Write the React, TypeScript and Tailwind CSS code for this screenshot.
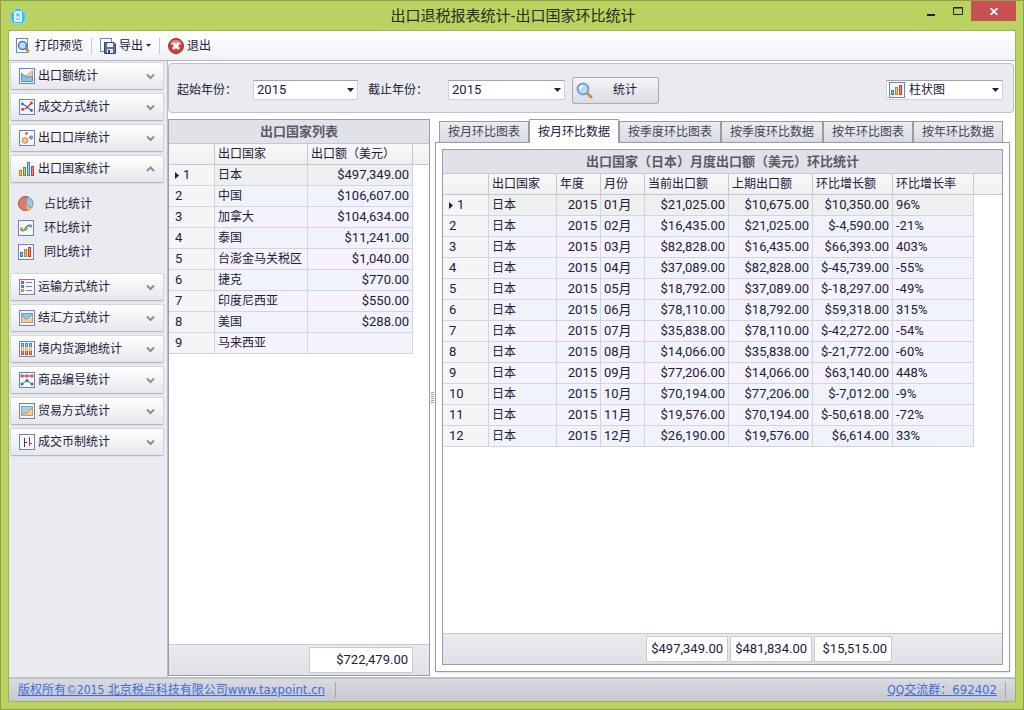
import React from 'react';

// Toolbar and sidebar glyphs, all drawn on a 16x16 grid
const Frame: React.FC<{ children?: React.ReactNode }> = ({ children }) => (
    <svg width="16" height="16" viewBox="0 0 16 16" className="shrink-0" aria-hidden="true">
        <rect x="0.5" y="0.5" width="15" height="15" fill="#f4f7fd" stroke="#6c84bd" />
        {children}
    </svg>
);

const BarsIcon = () => (
    <Frame>
        <rect x="2.5" y="8.5" width="2" height="4" fill="#8ec5ee" stroke="#2f7fbf" />
        <rect x="6.5" y="5.5" width="2" height="7" fill="#f6c27a" stroke="#c77e2c" />
        <rect x="10.5" y="3.5" width="2" height="9" fill="#f08a70" stroke="#c9402c" />
    </Frame>
);

const AreaIcon = () => (
    <Frame>
        <path d="M4 8.5 L8 7.5 L13.5 2.5 V13 H3Z" fill="#f6d09a" stroke="#d99a58" />
        <path d="M2.5 5.5 L8 9.5 L13.5 8 V13.5 H2.5Z" fill="#8cc3e8" stroke="#4c8fc2" />
    </Frame>
);

const CrossIcon = () => (
    <Frame>
        <path d="M3.5 5 L7 7 L9 9 L12.5 11.5" stroke="#3a6fc0" strokeWidth="1.3" fill="none" />
        <path d="M3.5 10.5 L7 9.5 L12.5 4" stroke="#cc3d38" strokeWidth="1.3" fill="none" />
        <circle cx="3.5" cy="5" r="1.4" fill="#3a6fc0" />
        <circle cx="12.5" cy="11.5" r="1.4" fill="#3a6fc0" />
        <circle cx="3.5" cy="10.5" r="1.4" fill="#cc3d38" />
        <circle cx="12.5" cy="4" r="1.4" fill="#cc3d38" />
    </Frame>
);

const BubbleIcon = () => (
    <Frame>
        <circle cx="6" cy="10.5" r="2.8" fill="#f5c98d" stroke="#c98338" />
        <circle cx="12" cy="7.5" r="1.5" fill="#8fb8e6" stroke="#3d70b5" />
        <circle cx="7.5" cy="3.5" r="1" fill="#ee8a80" stroke="#c43b33" />
    </Frame>
);

const ColorBarsIcon = () => (
    <svg width="16" height="16" viewBox="0 0 16 16" className="shrink-0" aria-hidden="true">
        <rect x="0.5" y="9.5" width="2" height="5" fill="#f8cf8a" stroke="#c97a22" />
        <rect x="4.5" y="6.5" width="2" height="8" fill="#b4d67a" stroke="#5d9133" />
        <rect x="8.5" y="1.5" width="2" height="13" fill="#9ccaf0" stroke="#3e84c2" />
        <rect x="12.5" y="5.5" width="2" height="9" fill="#f08a78" stroke="#c4402e" />
    </svg>
);

const ListIcon = () => (
    <Frame>
        <rect x="2" y="2" width="3" height="3" fill="#d9503f" />
        <rect x="2" y="6" width="3" height="3" fill="#3a86cc" />
        <rect x="2" y="10" width="3" height="3" fill="#e58a2c" />
        <path d="M7 3.5H13 M7 7.5H13 M7 11.5H13" stroke="#6f87ba" />
    </Frame>
);

const EnvelopeIcon = () => (
    <Frame>
        <rect x="2.5" y="3.5" width="11" height="9" fill="#f5cd94" stroke="#d09450" />
        <path d="M2.5 3.5 V5 L7 9.5 L13.5 4 V3.5Z" fill="#8fc7ec" stroke="#5b9fcc" />
    </Frame>
);

const TubesIcon = () => (
    <Frame>
        {[2, 6, 10].map(x => (
            <g key={x}>
                <rect x={x} y="2" width="3" height="4" fill="#3f8ed2" />
                <rect x={x} y="6" width="3" height="4" fill="#f2b66a" />
                <rect x={x} y="10" width="3" height="4" fill="#d2452f" />
                <rect x={x + 1} y="3" width="1" height="10" fill="#fff" fillOpacity="0.45" />
            </g>
        ))}
    </Frame>
);

const LinesIcon = () => (
    <Frame>
        <path d="M3 4H13" stroke="#cc3d38" />
        <path d="M3 12 L8 8.5 L13 12" stroke="#2f6fc0" fill="none" />
        {[3, 8, 13].map(x => (
            <circle key={x} cx={x} cy="4" r="1.2" fill="#f6b5ae" stroke="#cc3d38" />
        ))}
        <circle cx="3" cy="12" r="1.5" fill="#2f6fc0" />
        <circle cx="8" cy="8.5" r="1.5" fill="#2f6fc0" />
        <circle cx="13" cy="12" r="1.5" fill="#2f6fc0" />
    </Frame>
);

const SlopeIcon = () => (
    <Frame>
        <rect x="2.5" y="3.5" width="11" height="9" fill="#9dd0ee" stroke="#7ba9c4" />
        <path d="M2.5 12.5 V10 L5 11 L8 10 L10 7 L13.5 5 V12.5Z" fill="#f5cd94" stroke="#d09450" />
    </Frame>
);

const TicksIcon = () => (
    <Frame>
        <path d="M5.5 4V13 M5.5 8.5H8" stroke="#3a3f55" fill="none" />
        <path d="M10.5 3V12 M10.5 9.5H13" stroke="#c9302c" fill="none" />
    </Frame>
);

const PieIcon = () => (
    <svg width="16" height="16" viewBox="0 0 16 16" className="shrink-0" aria-hidden="true">
        <circle cx="7.5" cy="7.5" r="7" fill="#e0796c" stroke="#b9473f" />
        <path d="M8 8 L10 1 A7 7 0 0 1 13.5 12Z" fill="#9ccbea" stroke="#6f9fc4" />
        <path d="M8 8 L13 12.5 A7 7 0 0 1 9 14.5Z" fill="#f4c48c" stroke="#d09450" />
    </svg>
);

const WaveIcon = () => (
    <Frame>
        <path d="M3 10.5 H6 C8 10.5 8 5.5 10 5.5 H13" stroke="#5b8a3c" strokeWidth="1.5" fill="none" />
        <circle cx="3.5" cy="9" r="1.2" fill="#e8c08a" stroke="#b7792e" />
        <circle cx="8" cy="8.5" r="1.3" fill="#c6dfae" stroke="#5b8a3c" />
        <circle cx="12.5" cy="6" r="1.2" fill="#a9cbee" stroke="#4a84c4" />
    </Frame>
);

const PreviewIcon = () => (
    <svg width="16" height="16" viewBox="0 0 16 16" className="shrink-0" aria-hidden="true">
        <rect x="0.5" y="0.5" width="11" height="14" fill="#fff" stroke="#7389b8" />
        <path d="M9.5 10.5 L13 14" stroke="#c9853d" strokeWidth="2.5" />
        <circle cx="6.5" cy="7.5" r="4" fill="#b9dcf5" stroke="#4d79b3" strokeWidth="1.5" />
    </svg>
);

const ExportIcon = () => (
    <svg width="16" height="16" viewBox="0 0 16 16" className="shrink-0" aria-hidden="true">
        <rect x="0.5" y="0.5" width="11" height="13" fill="#f7f9fd" stroke="#7389b8" />
        <path d="M4.5 4.5H14 L15.5 6V15.5H4.5Z" fill="#5f7193" stroke="#34476b" />
        <rect x="7" y="5" width="6" height="4" fill="#e9eef7" />
        <rect x="7" y="11" width="6" height="4" fill="#dfe6f2" />
        <rect x="8" y="12" width="2" height="3" fill="#34476b" />
    </svg>
);

const ExitIcon = () => (
    <svg width="16" height="16" viewBox="0 0 16 16" className="shrink-0" aria-hidden="true">
        <circle cx="8" cy="8" r="7.5" fill="#cf4037" stroke="#9d2e2a" />
        <path d="M2 6 A6.5 6.5 0 0 1 14 6 Q8 9 2 6Z" fill="#e2847b" />
        <path d="M5 5 L11 11 M11 5 L5 11" stroke="#fff" strokeWidth="2.8" />
    </svg>
);

const SearchIcon = () => (
    <svg width="17" height="17" viewBox="0 0 17 17" className="shrink-0" aria-hidden="true">
        <path d="M11 11 L15 15" stroke="#d58a3c" strokeWidth="3" strokeLinecap="round" />
        <circle cx="7" cy="7" r="5.5" fill="#b5dbf6" stroke="#7f9ccc" strokeWidth="2" />
        <path d="M4 7 A3 3 0 0 1 7 4" stroke="#fff" strokeWidth="1.5" fill="none" />
    </svg>
);

const AppIcon = () => (
    <svg width="16" height="16" viewBox="0 0 16 16" className="shrink-0" aria-hidden="true">
        <path d="M4 3 Q5 0 8 0 Q11 0 12 3 Q16 4 15.5 9 Q15 15.5 11 15.5 H5 Q1 15.5 0.5 9 Q0 4 4 3Z" fill="#3fbdf0" stroke="#7fe0f8" />
        <rect x="4.5" y="3.5" width="7" height="10" rx="1" fill="#d8f4fc" stroke="#fff" />
        <path d="M6 5.5L10 8.5M10 5.5L6 8.5M6 11H10" stroke="#4ab7df" fill="none" />
    </svg>
);

const Chevron: React.FC<{ up?: boolean }> = ({ up }) => (
    <svg width="9" height="7" viewBox="0 0 9 7" className="mr-2 ml-auto shrink-0" aria-hidden="true">
        <path d={up ? 'M1 5 L4.5 1.5 L8 5' : 'M1 1.5 L4.5 5 L8 1.5'} fill="none" stroke="#8b8c99" strokeWidth="2" />
    </svg>
);

const Caret = ({ className = 'w-[7px]' }: { className?: string }) => (
    <svg viewBox="0 0 7 4" className={`shrink-0 ${className}`} aria-hidden="true">
        <path d="M0 0H7L3.5 4Z" fill="#20203a" />
    </svg>
);

const topGroups = [
    { label: '出口额统计', icon: <AreaIcon /> },
    { label: '成交方式统计', icon: <CrossIcon /> },
    { label: '出口口岸统计', icon: <BubbleIcon /> },
    { label: '出口国家统计', icon: <ColorBarsIcon />, open: true },
];

const subItems = [
    { label: '占比统计', icon: <PieIcon /> },
    { label: '环比统计', icon: <WaveIcon /> },
    { label: '同比统计', icon: <BarsIcon /> },
];

const bottomGroups = [
    { label: '运输方式统计', icon: <ListIcon /> },
    { label: '结汇方式统计', icon: <EnvelopeIcon /> },
    { label: '境内货源地统计', icon: <TubesIcon /> },
    { label: '商品编号统计', icon: <LinesIcon /> },
    { label: '贸易方式统计', icon: <SlopeIcon /> },
    { label: '成交币制统计', icon: <TicksIcon /> },
];

const countries = [
    ['日本', '$497,349.00'],
    ['中国', '$106,607.00'],
    ['加拿大', '$104,634.00'],
    ['泰国', '$11,241.00'],
    ['台澎金马关税区', '$1,040.00'],
    ['捷克', '$770.00'],
    ['印度尼西亚', '$550.00'],
    ['美国', '$288.00'],
    ['马来西亚', ''],
];

const months = [
    ['01月', '$21,025.00', '$10,675.00', '$10,350.00', '96%'],
    ['02月', '$16,435.00', '$21,025.00', '$-4,590.00', '-21%'],
    ['03月', '$82,828.00', '$16,435.00', '$66,393.00', '403%'],
    ['04月', '$37,089.00', '$82,828.00', '$-45,739.00', '-55%'],
    ['05月', '$18,792.00', '$37,089.00', '$-18,297.00', '-49%'],
    ['06月', '$78,110.00', '$18,792.00', '$59,318.00', '315%'],
    ['07月', '$35,838.00', '$78,110.00', '$-42,272.00', '-54%'],
    ['08月', '$14,066.00', '$35,838.00', '$-21,772.00', '-60%'],
    ['09月', '$77,206.00', '$14,066.00', '$63,140.00', '448%'],
    ['10月', '$70,194.00', '$77,206.00', '$-7,012.00', '-9%'],
    ['11月', '$19,576.00', '$70,194.00', '$-50,618.00', '-72%'],
    ['12月', '$26,190.00', '$19,576.00', '$6,614.00', '33%'],
];

const tabs = ['按月环比图表', '按月环比数据', '按季度环比图表', '按季度环比数据', '按年环比图表', '按年环比数据'];

const rowColor = (i: number) => (i === 0 ? 'bg-[#eeefef]' : i % 2 ? 'bg-[#f0f4fa]' : 'bg-[#f7f3fc]');

const cell = 'h-[21px] border-r border-b border-[#d3d4dc] px-[3px] whitespace-nowrap';
const headCell = 'h-[21px] border-r border-b border-[#c6c7d0] px-[3px] text-left font-normal whitespace-nowrap';
const numeric = "font-[Roboto,'Noto_Sans_CJK_SC',sans-serif] text-[13px]";

const SideGroup: React.FC<{ label: string; icon: React.ReactNode; open?: boolean }> = ({ label, icon, open }) => (
    <button
        aria-expanded={!!open}
        className="flex h-7 w-full items-center gap-[3px] rounded-xs border border-[#d5d6dc] border-b-[#b5b6c0] bg-linear-to-b from-white to-[#e6e7eb] pl-2 shadow-xs"
    >
        {icon}
        <span>{label}</span>
        <Chevron up={open} />
    </button>
);

const RowHead: React.FC<{ index: number }> = ({ index }) => (
    <td className={`${cell} ${numeric} bg-[#f4f5f7]`}>
        <span className="flex items-center gap-1 pl-[3px]">
            {index === 0 && (
                <svg width="4" height="7" viewBox="0 0 4 7" aria-hidden="true">
                    <path d="M0 0L4 3.5L0 7Z" fill="#20203a" />
                </svg>
            )}
            {index + 1}
        </span>
    </td>
);

const CountryTable = () => (
    <table className="w-full table-fixed border-separate border-spacing-0">
        <colgroup>
            <col className="w-[46px]" />
            <col className="w-[93px]" />
            <col className="w-[105px]" />
            <col />
        </colgroup>
        <thead className="bg-linear-to-b from-[#f8f8f9] to-[#efeff1]">
            <tr>
                <th className={headCell}></th>
                <th className={headCell}>出口国家</th>
                <th className={headCell}>出口额（美元）</th>
                <th className="border-b border-[#c6c7d0]"></th>
            </tr>
        </thead>
        <tbody>
            {countries.map(([name, amount], i) => (
                <tr key={name}>
                    <RowHead index={i} />
                    <td className={`${cell} ${rowColor(i)}`}>{name}</td>
                    <td className={`${cell} ${rowColor(i)} ${numeric} text-right`}>{amount}</td>
                    <td></td>
                </tr>
            ))}
        </tbody>
    </table>
);

const MonthTable = () => (
    <table className="w-full table-fixed border-separate border-spacing-0">
        <colgroup>
            <col className="w-[46px]" />
            <col className="w-[68px]" />
            <col className="w-[44px]" />
            <col className="w-[44px]" />
            <col className="w-[84px]" />
            <col className="w-[84px]" />
            <col className="w-[80px]" />
            <col className="w-[81px]" />
            <col />
        </colgroup>
        <thead className="bg-linear-to-b from-[#f8f8f9] to-[#efeff1]">
            <tr>
                {['', '出口国家', '年度', '月份', '当前出口额', '上期出口额', '环比增长额', '环比增长率'].map(h => (
                    <th key={h} className={headCell}>{h}</th>
                ))}
                <th className="border-b border-[#c6c7d0]"></th>
            </tr>
        </thead>
        <tbody>
            {months.map(([month, current, previous, growth, rate], i) => (
                <tr key={month}>
                    <RowHead index={i} />
                    <td className={`${cell} ${rowColor(i)}`}>日本</td>
                    <td className={`${cell} ${rowColor(i)} ${numeric} text-right`}>2015</td>
                    <td className={`${cell} ${rowColor(i)} ${numeric}`}>{month}</td>
                    <td className={`${cell} ${rowColor(i)} ${numeric} text-right`}>{current}</td>
                    <td className={`${cell} ${rowColor(i)} ${numeric} text-right`}>{previous}</td>
                    <td className={`${cell} ${rowColor(i)} ${numeric} text-right`}>{growth}</td>
                    <td className={`${cell} ${rowColor(i)} ${numeric}`}>{rate}</td>
                    <td></td>
                </tr>
            ))}
        </tbody>
    </table>
);

const Select: React.FC<{ id: string; value: string; className: string }> = ({ id, value, className }) => (
    <div className={`relative flex items-center ${className}`}>
        <select
            id={id}
            defaultValue={value}
            className={`h-5 w-full appearance-none border border-[#d0d1d9] border-t-[#a3a4b1] bg-white pl-[3px] ${numeric}`}
        >
            <option>{value}</option>
        </select>
        <Caret className="pointer-events-none absolute right-1 w-[7px]" />
    </div>
);

const Total: React.FC<{ value: string; className: string }> = ({ value, className }) => (
    <output className={`flex h-[26px] shrink-0 items-center justify-end border border-[#c9cad2] bg-white pr-1 ${numeric} ${className}`}>
        {value}
    </output>
);

const App: React.FC = () => {
    return (
        <div className="flex min-h-screen flex-col border border-[#8fa04c] bg-[#bad25f] px-[7px] pb-[7px] font-['DejaVu_Sans_Condensed','Noto_Sans_CJK_SC',sans-serif] text-xs leading-4 text-[#20203a]">
            <header className="flex h-[29px] shrink-0 items-center">
                <div className="flex flex-1 pl-0.5">
                    <AppIcon />
                </div>
                <h1 className="text-[15px] text-[#2a2c1e]">出口退税报表统计-出口国家环比统计</h1>
                <div className="flex flex-1 items-start justify-end self-stretch">
                    <button aria-label="最小化" className="flex h-5 w-7 items-center justify-center">
                        <svg width="8" height="12" viewBox="0 0 8 12"><path d="M0 10H8" stroke="#222" strokeWidth="2" /></svg>
                    </button>
                    <button aria-label="最大化" className="flex h-5 w-[26px] items-center justify-center">
                        <svg width="10" height="8" viewBox="0 0 10 8"><path d="M0.5 0.5H9.5V7.5H0.5Z M0 1H10" fill="none" stroke="#222" /></svg>
                    </button>
                    <button aria-label="关闭" className="flex h-5 w-[45px] items-center justify-center bg-[#c75050]">
                        <svg width="8" height="7" viewBox="0 0 8 7"><path d="M0.5 0L7.5 7M7.5 0L0.5 7" stroke="#fff" strokeWidth="1.8" /></svg>
                    </button>
                </div>
            </header>

            <div className="flex flex-1 flex-col border border-[#a0b350] bg-[#eaebef]">
                <nav className="flex h-[30px] shrink-0 items-center border-b border-[#b3b4be] bg-linear-to-b from-white to-[#f1f2f6] pl-[7px]">
                    <button className="flex items-center gap-[3px]"><PreviewIcon />打印预览</button>
                    <span className="mx-2 h-4 w-px bg-[#c8c9d0]" />
                    <button className="flex items-center gap-[3px]"><ExportIcon />导出<Caret className="w-[5px]" /></button>
                    <span className="mx-2 h-4 w-px bg-[#c8c9d0]" />
                    <button className="flex items-center gap-[3px]"><ExitIcon />退出</button>
                </nav>

                <div className="flex flex-1">
                    <aside className="flex w-[158px] shrink-0 flex-col gap-[3px] px-px pt-px pr-[3px]">
                        {topGroups.map(g => <SideGroup key={g.label} {...g} />)}
                        <ul className="py-1.5">
                            {subItems.map(s => (
                                <li key={s.label}>
                                    <a href="#" className="flex h-6 items-center gap-2.5 pl-2">{s.icon}{s.label}</a>
                                </li>
                            ))}
                        </ul>
                        {bottomGroups.map(g => <SideGroup key={g.label} {...g} />)}
                    </aside>

                    <main className="flex min-w-0 flex-1 flex-col border-l border-[#b9bac4] bg-white pt-0.5 pr-px pb-px">
                        <form className="flex h-[50px] shrink-0 items-center rounded-sm border border-[#bfc0ca] bg-[#eaebef] pt-1 pr-[10px] pl-2" onSubmit={e => e.preventDefault()}>
                            <label htmlFor="from">起始年份：</label>
                            <Select id="from" value="2015" className="ml-4 w-[105px]" />
                            <label htmlFor="to" className="ml-2.5">截止年份：</label>
                            <Select id="to" value="2015" className="ml-5 w-[117px]" />
                            <button className="ml-[7px] flex h-[27px] w-[87px] items-center gap-5 rounded-xs border border-[#a9aab6] bg-linear-to-b from-[#f4f4f6] to-[#dcdde3] pl-[3px]">
                                <SearchIcon />统计
                            </button>
                            <div className="relative ml-auto flex w-[117px] items-center">
                                <select aria-label="图表类型" defaultValue="柱状图" className="h-5 w-full appearance-none border border-[#d0d1d9] border-t-[#a3a4b1] bg-white pl-[22px]">
                                    <option>柱状图</option>
                                </select>
                                <span className="pointer-events-none absolute left-[3px]"><BarsIcon /></span>
                                <Caret className="pointer-events-none absolute right-1 w-[7px]" />
                            </div>
                        </form>

                        <div className="mt-1.5 flex flex-1">
                            <section className="flex w-[262px] shrink-0 flex-col border border-[#9b9ca9]">
                                <h2 className="flex h-6 shrink-0 items-center justify-center border-b border-[#c6c7d0] bg-[#e1e2e7] text-[13px] font-bold text-[#5a5a6b]">出口国家列表</h2>
                                <div className="flex-1"><CountryTable /></div>
                                <div className="flex h-[31px] shrink-0 items-center justify-end border-t border-[#c6c7d0] bg-linear-to-b from-[#eaebef] to-[#e0e1e6] pr-4">
                                    <Total value="$722,479.00" className="w-[104px]" />
                                </div>
                            </section>

                            <div className="flex w-[5px] shrink-0 flex-col items-center justify-center gap-px">
                                {[0, 1, 2, 3, 4, 5].map(n => <span key={n} className="h-px w-[3px] bg-[#a5a6b2]" />)}
                            </div>

                            <section className="mr-1 mb-1 flex min-w-0 flex-1 flex-col">
                                <div role="tablist" className="flex h-[23px] shrink-0 items-end pl-1">
                                    {tabs.map((t, i) => (
                                        <button
                                            key={t}
                                            role="tab"
                                            aria-selected={i === 1}
                                            className={i === 1
                                                ? 'relative z-10 -mb-px h-6 border border-b-0 border-[#9b9ca9] bg-white px-2'
                                                : 'h-[21px] border border-b-0 border-[#9b9ca9] bg-linear-to-b from-[#ececf0] to-[#dadbe1] px-2 text-[#44445a]'}
                                        >
                                            {t}
                                        </button>
                                    ))}
                                </div>
                                <div role="tabpanel" className="flex flex-1 border border-[#9b9ca9] p-1.5 shadow-sm">
                                    <div className="flex min-w-0 flex-1 flex-col border border-[#9b9ca9]">
                                        <h2 className="flex h-6 shrink-0 items-center justify-center border-b border-[#c6c7d0] bg-[#e1e2e7] text-[13px] font-bold text-[#5a5a6b]">出口国家（日本）月度出口额（美元）环比统计</h2>
                                        <div className="flex-1"><MonthTable /></div>
                                        <div className="flex h-[31px] shrink-0 items-center gap-0.5 border-t border-[#c6c7d0] bg-linear-to-b from-[#eaebef] to-[#e0e1e6] pl-[203px]">
                                            <Total value="$497,349.00" className="w-[82px]" />
                                            <Total value="$481,834.00" className="w-[82px]" />
                                            <Total value="$15,515.00" className="w-[78px]" />
                                        </div>
                                    </div>
                                </div>
                            </section>
                        </div>
                    </main>
                </div>

                <footer className="flex h-6 shrink-0 items-center border-t-2 border-[#bcc1c6] bg-linear-to-b from-[#dadbe0] to-[#c6c7ce] px-[9px] text-[#3f6be0]">
                    <a href="#" className="underline">版权所有©2015 北京税点科技有限公司<span className="text-[13px]">www.taxpoint.cn</span></a>
                    <span className="ml-2.5 h-4 w-px bg-[#a5a6b0]" />
                    <a href="#" className="ml-auto underline">QQ交流群：<span className="text-[13px]">692402</span></a>
                    <span className="ml-2 h-4 w-px bg-[#a5a6b0]" />
                </footer>
            </div>
        </div>
    );
};

export default App;
